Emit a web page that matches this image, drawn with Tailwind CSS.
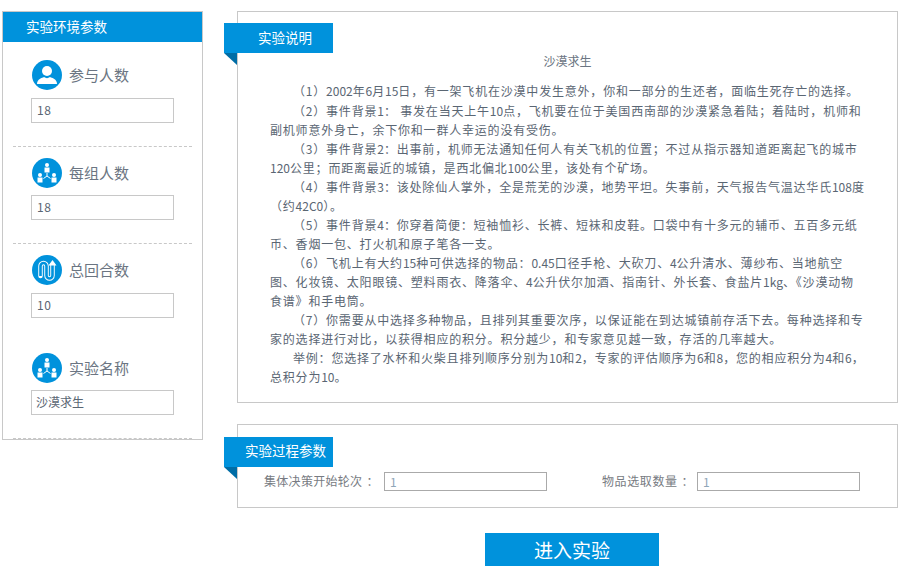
<!DOCTYPE html>
<html lang="zh">
<head>
    <meta charset="UTF-8">
    <title>实验设置</title>
    <script src="https://cdn.jsdelivr.net/npm/@tailwindcss/browser@4"></script>
</head>
<body class="bg-white font-['Noto_Sans_CJK_SC',sans-serif] text-[#5a6673] overflow-hidden">
<div class="relative flex w-[909px] h-[570px] pl-[2px] pt-[11px]">
    <!-- left column -->
    <div class="w-[201px] h-[429px] border border-[#c8c8c8]">
        <div class="h-[30px] bg-[#0092dc] text-white text-[13.5px] leading-[28px] pl-[23px]">实验环境参数</div>

        <div class="mx-[10px] h-[105px] pt-[18px] border-b border-dashed border-[#c8c8c8]">
            <div class="flex items-center h-[30px] pl-[19px] gap-[7px] text-[15px] text-[#6b7582]">
                <svg class="w-[30px] h-[30px]" viewBox="0 0 30 30"><circle cx="15" cy="15" r="15" fill="#0092dc"/><circle cx="15" cy="11" r="5" fill="#fff"/><path d="M5 24c0-5 5-6 7-7 2 1.500 4 1.500 6 0 2 1 7 2 7 7z" fill="#fff"/></svg>
                <span>参与人数</span>
            </div>
            <input value="18" class="block mt-[8px] ml-[18px] w-[143px] h-[25px] border border-[#c8c8c8] px-[5px] pb-[3px] text-[12px] tracking-[0.7px] text-[#5a6673]">
        </div>

        <div class="mx-[10px] h-[97px] pt-[11px] border-b border-dashed border-[#c8c8c8]">
            <div class="flex items-center h-[30px] pl-[19px] gap-[7px] text-[15px] text-[#6b7582]">
                <svg class="w-[30px] h-[30px]" viewBox="0 0 30 30"><circle cx="15" cy="15" r="15" fill="#0092dc"/><g fill="#fff"><circle cx="15" cy="7" r="2"/><path d="M12.500 9.500h5v5h-5z"/><circle cx="8" cy="17" r="2"/><path d="M5.500 19.500h5v5h-5z"/><circle cx="22" cy="17" r="2"/><path d="M19.500 19.500h5v5h-5z"/></g><path d="M15 15v3M15 18l-3.500 2.500M15 18l3.500 2.500" stroke="#fff" fill="none"/></svg>
                <span>每组人数</span>
            </div>
            <input value="18" class="block mt-[7px] ml-[18px] w-[143px] h-[25px] border border-[#c8c8c8] px-[5px] pb-[3px] text-[12px] tracking-[0.7px] text-[#5a6673]">
        </div>

        <div class="mx-[10px] h-[98px] pt-[11px]">
            <div class="flex items-center h-[30px] pl-[19px] gap-[7px] text-[15px] text-[#6b7582]">
                <svg class="w-[30px] h-[30px]" viewBox="0 0 30 30"><circle cx="15" cy="15" r="15" fill="#0092dc"/><path d="M8.500 21V11a3 3 0 0 1 6 0v9.500a3 3 0 0 0 6 0V10" stroke="#fff" stroke-width="4.500" fill="none" stroke-linecap="round"/><path d="M8.500 21V11a3 3 0 0 1 6 0v9.500a3 3 0 0 0 6 0V10" stroke="#0092dc" stroke-width="2.600" fill="none"/><path d="M20.500 5l4 5.500h-8z" fill="#fff"/></svg>
                <span>总回合数</span>
            </div>
            <input value="10" class="block mt-[8px] ml-[18px] w-[143px] h-[25px] border border-[#c8c8c8] px-[5px] pb-[3px] text-[12px] tracking-[0.7px] text-[#5a6673]">
        </div>

        <div class="mx-[10px] h-[97px] pt-[11px] border-b border-dashed border-[#c8c8c8]">
            <div class="flex items-center h-[30px] pl-[19px] gap-[7px] text-[15px] text-[#6b7582]">
                <svg class="w-[30px] h-[30px]" viewBox="0 0 30 30"><circle cx="15" cy="15" r="15" fill="#0092dc"/><g fill="#fff"><circle cx="15" cy="7" r="2"/><path d="M12.500 9.500h5v5h-5z"/><circle cx="8" cy="17" r="2"/><path d="M5.500 19.500h5v5h-5z"/><circle cx="22" cy="17" r="2"/><path d="M19.500 19.500h5v5h-5z"/></g><path d="M15 15v3M15 18l-3.500 2.500M15 18l3.500 2.500" stroke="#fff" fill="none"/></svg>
                <span>实验名称</span>
            </div>
            <input value="沙漠求生" class="block mt-[7px] ml-[18px] w-[143px] h-[25px] border border-[#c8c8c8] px-[4px] pb-[2px] text-[12px] text-[#5a6673]">
        </div>
    </div>

    <!-- right column -->
    <div class="ml-[34px] w-[661px]">
        <div class="relative h-[392px] border border-[#c8c8c8] pt-[39px] pl-[32px] text-[12px] leading-[19px]">
            <div class="absolute left-[-14px] top-[11px] w-[109px] h-[30px] bg-[#0092dc] text-white text-[13.5px] leading-[28px] pl-[34px]">实验说明</div>
            <div class="absolute left-[-14px] top-[41px] w-0 h-0 border-l-[13px] border-t-[12px] border-l-transparent border-t-[#006da6]"></div>
            <p class="text-center pr-[32px] mb-[11px] text-[#6b7582]">沙漠求生</p>
            <div class="tracking-[0.8px] whitespace-nowrap">
                <p class="indent-[23px] mb-[1px]">（1）<span class="tracking-normal">2002</span>年<span class="tracking-normal">6</span>月<span class="tracking-normal">15</span>日，有一架飞机在沙漠中发生意外，你和一部分的生还者，面临生死存亡的选择。</p>
                <p class="indent-[23px]">（2）事件背景<span class="tracking-normal">1</span>： 事发在当天上午<span class="tracking-normal">10</span>点，飞机要在位于美国西南部的沙漠紧急着陆；着陆时，机师和<br>副机师意外身亡，余下你和一群人幸运的没有受伤。</p>
                <p class="indent-[23px]">（3）事件背景<span class="tracking-normal">2</span>：出事前，机师无法通知任何人有关飞机的位置；不过从指示器知道距离起飞的城市<br><span class="tracking-normal">120</span>公里；而距离最近的城镇，是西北偏北<span class="tracking-normal">100</span>公里，该处有个矿场。</p>
                <p class="indent-[23px]">（4）事件背景<span class="tracking-normal">3</span>：该处除仙人掌外，全是荒芜的沙漠，地势平坦。失事前，天气报告气温达华氏<span class="tracking-normal">108</span>度<br>（约<span class="tracking-normal">42C0</span>）。</p>
                <p class="indent-[23px]">（5）事件背景<span class="tracking-normal">4</span>：你穿着简便：短袖恤衫、长裤、短袜和皮鞋。口袋中有十多元的辅币、五百多元纸<br>币、香烟一包、打火机和原子笔各一支。</p>
                <p class="indent-[23px]">（6）飞机上有大约<span class="tracking-normal">15</span>种可供选择的物品：<span class="tracking-normal">0.45</span>口径手枪、大砍刀、<span class="tracking-normal">4</span>公升清水、薄纱布、当地航空<br>图、化妆镜、太阳眼镜、塑料雨衣、降落伞、<span class="tracking-normal">4</span>公升伏尔加酒、指南针、外长套、食盐片<span class="tracking-normal">1kg</span>、《沙漠动物<br>食谱》和手电筒。</p>
                <p class="indent-[23px]">（7）你需要从中选择多种物品，且排列其重要次序，以保证能在到达城镇前存活下去。每种选择和专<br>家的选择进行对比，以获得相应的积分。积分越少，和专家意见越一致，存活的几率越大。</p>
                <p class="indent-[23px]">举例：您选择了水杯和火柴且排列顺序分别为<span class="tracking-normal">10</span>和<span class="tracking-normal">2</span>，专家的评估顺序为<span class="tracking-normal">6</span>和<span class="tracking-normal">8</span>，您的相应积分为<span class="tracking-normal">4</span>和<span class="tracking-normal">6</span>，<br>总积分为<span class="tracking-normal">10</span>。</p>
            </div>
        </div>

        <div class="relative mt-[21px] h-[84px] border border-[#c8c8c8] pt-[47px] text-[12px] tracking-[0.3px] text-[#777b82]">
            <div class="absolute left-[-14px] top-[12px] w-[109px] h-[30px] bg-[#0092dc] text-white text-[13.5px] tracking-normal leading-[27px] pl-[21px]">实验过程参数</div>
            <div class="absolute left-[-14px] top-[42px] w-0 h-0 border-l-[13px] border-t-[12px] border-l-transparent border-t-[#006da6]"></div>
            <div class="flex items-center h-[19px] pl-[26px]">
                <span class="w-[120px] pb-[1px]">集体决策开始轮次<span class="ml-[4px]">：</span></span>
                <input value="1" class="w-[163px] h-[19px] border border-[#aaaaaa] px-[5px] pb-[1px] text-[12px] text-[#8fa6b8]">
                <span class="ml-[55px] w-[95px] pb-[1px] tracking-[0.6px]">物品选取数量<span class="ml-[4px]">：</span></span>
                <input value="1" class="w-[163px] h-[19px] border border-[#aaaaaa] px-[5px] pb-[1px] text-[12px] text-[#8fa6b8]">
            </div>
        </div>

        <button class="block mt-[25px] ml-[248px] w-[174px] h-[33px] bg-[#0092dc] text-white text-[19px] leading-[33px]">进入实验</button>
    </div>
</div>
</body>
</html>
